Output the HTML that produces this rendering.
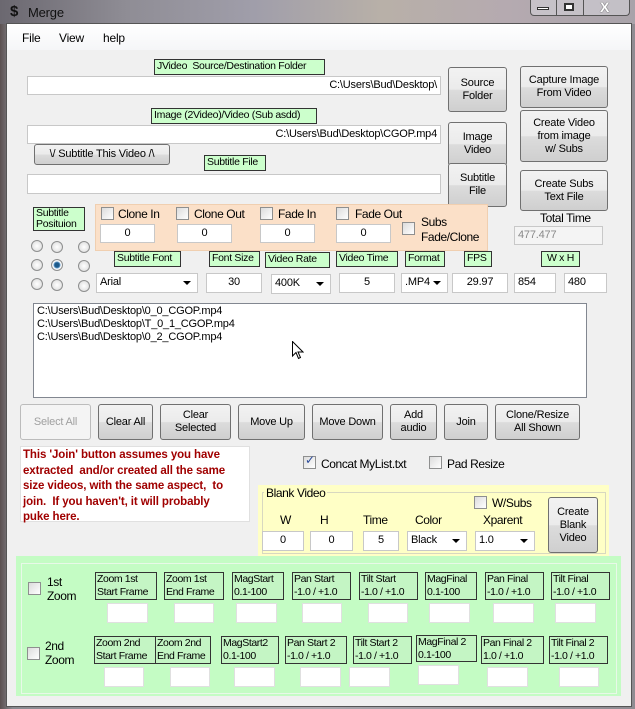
<!DOCTYPE html>
<html><head><meta charset="utf-8"><style>
*{box-sizing:border-box;margin:0;padding:0}
body{width:635px;height:709px;overflow:hidden;position:relative;background:linear-gradient(90deg,#5a5050 0,#8a8a90 2%,#a9a7ad 50%,#8f8c92 100%);font-family:"Liberation Sans",sans-serif;font-size:11px;color:#000;letter-spacing:-0.2px}
.a{position:absolute}
.client{position:absolute;left:6px;top:23px;width:626px;height:684px;background:#f0f0f0;border:1px solid #555}
.tb{position:absolute;background:#fff;border:1px solid #c8c8c8;height:19px;line-height:17px;padding:0 3px;white-space:nowrap;overflow:hidden}
.lbl{position:absolute;background:#ccffcc;border:1px solid #333;line-height:13px;padding:0 2px;white-space:nowrap;font-size:10.5px;letter-spacing:-0.3px;overflow:hidden}
.lblt{position:absolute;background:#c4f5c4;border:1px solid #333;line-height:13px;padding:0 1px;white-space:nowrap;font-size:10.5px;letter-spacing:-0.4px;overflow:hidden}
.btn{position:absolute;background:linear-gradient(#f2f2f2,#ebebeb 50%,#dcdcdc 51%,#cfcfcf);border:1px solid #707070;border-radius:3px;text-align:center;display:flex;align-items:center;justify-content:center;line-height:13px}
.cb{position:absolute;width:13px;height:13px;border:1px solid #8e8f8f;background:linear-gradient(135deg,#dcdcdc,#fff)}
.rd{position:absolute;width:12px;height:12px;border:1px solid #8e8f8f;border-radius:50%;background:radial-gradient(#fff,#d8d8d8)}
.dd::after{content:"";position:absolute;right:6px;top:7px;border-left:4px solid transparent;border-right:4px solid transparent;border-top:4px solid #000}
.t12{font-size:12px;letter-spacing:-0.4px}
</style></head><body>
<div class="a" style="left:0;top:0;width:635px;height:24px;background:linear-gradient(90deg,#6b6870,#8f8d95 20%,#a09eaa 40%,#b8b0a8 60%,#b5aab0 80%,#a9a3aa)"></div>
<div class="a" style="left:10px;top:3px;font-size:15px;font-weight:bold;color:#111">$</div>
<div class="a" style="left:28px;top:5px;font-size:13px;color:#111">Merge</div>
<div class="a" style="left:530px;top:-2px;width:100px;height:18px;border:1px solid #555;border-top:none;border-radius:0 0 4px 4px;background:rgba(220,220,225,.5)"></div>
<div class="a" style="left:556px;top:-2px;width:1px;height:18px;background:#555"></div>
<div class="a" style="left:583px;top:-2px;width:1px;height:18px;background:#555"></div>
<div class="a" style="left:537px;top:7px;width:12px;height:3px;background:#fff;border:1px solid #333"></div>
<div class="a" style="left:564px;top:3px;width:10px;height:8px;border:2px solid #333;background:#fff"></div>
<div class="a" style="left:600px;top:-1px;font-size:14px;font-weight:bold;color:#fff;text-shadow:0 0 1px #000">X</div>

<div class="client"></div>
<div class="a" style="left:7px;top:24px;width:624px;height:26px;background:linear-gradient(#fff,#f5f6f8)"></div>
<div class="a" style="left:22px;top:31px;font-size:12px">File</div>
<div class="a" style="left:59px;top:31px;font-size:12px">View</div>
<div class="a" style="left:103px;top:31px;font-size:12px">help</div>

<div class="lbl" style="left:154px;top:59px;width:171px;height:16px">JVideo&nbsp; Source/Destination Folder</div>
<div class="tb" style="left:27px;top:76px;width:414px;text-align:right">C:\Users\Bud\Desktop\</div>
<div class="btn" style="left:448px;top:67px;width:59px;height:45px">Source<br>Folder</div>
<div class="btn" style="left:520px;top:66px;width:88px;height:42px">Capture Image<br>From Video</div>

<div class="lbl" style="left:151px;top:108px;width:166px;height:16px">Image (2Video)/Video (Sub asdd)</div>
<div class="tb" style="left:27px;top:125px;width:414px;text-align:right">C:\Users\Bud\Desktop\CGOP.mp4</div>
<div class="btn" style="left:448px;top:122px;width:59px;height:44px">Image<br>Video</div>
<div class="btn" style="left:520px;top:110px;width:88px;height:52px">Create Video<br>from image<br>w/ Subs</div>

<div class="btn" style="left:34px;top:144px;width:136px;height:21px">\/ Subtitle This Video /\</div>
<div class="lbl" style="left:204px;top:155px;width:62px;height:16px">Subtitle File</div>
<div class="tb" style="left:27px;top:174px;width:414px;height:20px"></div>
<div class="btn" style="left:448px;top:163px;width:59px;height:44px">Subtitle<br>File</div>
<div class="btn" style="left:520px;top:170px;width:88px;height:41px">Create Subs<br>Text File</div>

<div class="lbl" style="left:33px;top:207px;width:52px;height:24px;line-height:11px">Subtitle<br>Posituion</div>
<div class="a" style="left:95px;top:204px;width:393px;height:47px;background:#fbe0c8;border:1px solid #f0cfb0"></div>
<div class="cb" style="left:101px;top:207px"></div><div class="a t12" style="left:118px;top:207px">Clone In</div>
<div class="cb" style="left:176px;top:207px"></div><div class="a t12" style="left:194px;top:207px">Clone Out</div>
<div class="cb" style="left:260px;top:207px"></div><div class="a t12" style="left:278px;top:207px">Fade In</div>
<div class="cb" style="left:336px;top:207px"></div><div class="a t12" style="left:355px;top:207px">Fade Out</div>
<div class="tb" style="left:100px;top:224px;width:55px;text-align:center">0</div>
<div class="tb" style="left:177px;top:224px;width:55px;text-align:center">0</div>
<div class="tb" style="left:260px;top:224px;width:55px;text-align:center">0</div>
<div class="tb" style="left:336px;top:224px;width:55px;text-align:center">0</div>
<div class="cb" style="left:402px;top:222px"></div><div class="a t12" style="left:421px;top:215px;line-height:15px">Subs<br>Fade/Clone</div>
<div class="a t12" style="left:540px;top:211px">Total Time</div>
<div class="tb" style="left:514px;top:226px;width:89px;background:#f4f4f4;color:#888">477.477</div>

<div class="rd" style="left:31px;top:240px"></div><div class="rd" style="left:51px;top:241px"></div><div class="rd" style="left:78px;top:241px"></div>
<div class="rd" style="left:31px;top:259px"></div><div class="rd" style="left:51px;top:259px;background:radial-gradient(#1d5a8a 30%,#6aa0d0 45%,#fff 55%,#d8d8d8)"></div><div class="rd" style="left:78px;top:260px"></div>
<div class="rd" style="left:31px;top:278px"></div><div class="rd" style="left:51px;top:279px"></div><div class="rd" style="left:78px;top:280px"></div>

<div class="lbl" style="left:114px;top:251px;width:67px;height:16px">Subtitle Font</div>
<div class="lbl" style="left:209px;top:251px;width:51px;height:16px">Font Size</div>
<div class="lbl" style="left:265px;top:252px;width:65px;height:16px">Video Rate</div>
<div class="lbl" style="left:336px;top:251px;width:62px;height:16px">Video Time</div>
<div class="lbl" style="left:405px;top:251px;width:40px;height:16px">Format</div>
<div class="lbl" style="left:464px;top:251px;width:28px;height:16px">FPS</div>
<div class="lbl" style="left:541px;top:251px;width:39px;height:16px;text-align:center">W x H</div>
<div class="tb dd" style="left:96px;top:273px;width:102px;height:20px">Arial</div>
<div class="tb" style="left:206px;top:273px;width:56px;height:20px;text-align:center">30</div>
<div class="tb dd" style="left:271px;top:274px;width:60px;height:20px">400K</div>
<div class="tb" style="left:339px;top:273px;width:56px;height:20px;text-align:center">5</div>
<div class="tb dd" style="left:401px;top:273px;width:47px;height:20px">.MP4</div>
<div class="tb" style="left:452px;top:273px;width:56px;height:20px;text-align:center">29.97</div>
<div class="tb" style="left:514px;top:273px;width:42px;height:20px">854</div>
<div class="tb" style="left:564px;top:273px;width:43px;height:20px">480</div>

<div class="a" style="left:33px;top:303px;width:554px;height:95px;background:#fff;border:1px solid #828790;padding:1px 3px;line-height:13px">C:\Users\Bud\Desktop\0_0_CGOP.mp4<br>C:\Users\Bud\Desktop\T_0_1_CGOP.mp4<br>C:\Users\Bud\Desktop\0_2_CGOP.mp4</div>
<svg class="a" style="left:292px;top:341px" width="12" height="19" viewBox="0 0 12 19"><path d="M0.5 0.5 L0.5 15 L4 11.5 L6.5 17.5 L8.5 16.5 L6 11 L11 11 Z" fill="#fff" stroke="#000"/></svg>

<div class="btn" style="left:20px;top:404px;width:71px;height:36px;color:#a0a0a0;background:#f4f4f4;border-color:#bcbcbc">Select All</div>
<div class="btn" style="left:98px;top:404px;width:55px;height:36px">Clear All</div>
<div class="btn" style="left:160px;top:404px;width:71px;height:36px">Clear<br>Selected</div>
<div class="btn" style="left:238px;top:404px;width:67px;height:36px">Move Up</div>
<div class="btn" style="left:312px;top:404px;width:71px;height:36px">Move Down</div>
<div class="btn" style="left:390px;top:404px;width:47px;height:36px">Add<br>audio</div>
<div class="btn" style="left:444px;top:404px;width:44px;height:36px">Join</div>
<div class="btn" style="left:495px;top:404px;width:85px;height:36px">Clone/Resize<br>All Shown</div>

<div class="a" style="left:20px;top:446px;width:230px;height:76px;background:#fff;border:1px solid #e0e0e0;color:#a00000;font-weight:bold;font-size:11.5px;letter-spacing:-0.1px;line-height:15.5px;padding:1px 2px">This 'Join' button assumes you have<br>extracted&nbsp; and/or created all the same<br>size videos, with the same aspect,&nbsp; to<br>join.&nbsp; If you haven't, it will probably<br>puke here.</div>

<div class="cb" style="left:303px;top:456px"></div><div class="a" style="left:305px;top:453px;font-size:12px;color:#2a4a9a">✓</div>
<div class="a t12" style="left:321px;top:457px">Concat MyList.txt</div>
<div class="cb" style="left:429px;top:456px"></div><div class="a t12" style="left:447px;top:457px">Pad Resize</div>

<div class="a" style="left:258px;top:485px;width:351px;height:71px;background:#ffffc6"></div>
<div class="a" style="left:262px;top:492px;width:344px;height:62px;border:1px solid #d8d8c0"></div>
<div class="a t12" style="left:264px;top:486px;background:#ffffc6;padding:0 2px">Blank Video</div>
<div class="cb" style="left:474px;top:496px"></div><div class="a t12" style="left:492px;top:496px">W/Subs</div>
<div class="a t12" style="left:280px;top:513px">W</div>
<div class="a t12" style="left:320px;top:513px">H</div>
<div class="a t12" style="left:363px;top:513px">Time</div>
<div class="a t12" style="left:415px;top:513px">Color</div>
<div class="a t12" style="left:483px;top:513px">Xparent</div>
<div class="tb" style="left:262px;top:531px;width:42px;height:20px;text-align:center">0</div>
<div class="tb" style="left:310px;top:531px;width:43px;height:20px;text-align:center">0</div>
<div class="tb" style="left:363px;top:531px;width:36px;height:20px;text-align:center">5</div>
<div class="tb dd" style="left:407px;top:531px;width:60px;height:20px">Black</div>
<div class="tb dd" style="left:475px;top:531px;width:60px;height:20px">1.0</div>
<div class="btn" style="left:548px;top:497px;width:50px;height:56px">Create<br>Blank<br>Video</div>

<div class="a" style="left:16px;top:556px;width:605px;height:140px;background:#c4fcc4"></div>
<div class="a" style="left:21px;top:563px;width:596px;height:131px;border:1px solid #e8f8e8"></div>
<div class="cb" style="left:28px;top:582px"></div><div class="a t12" style="left:47px;top:575px;line-height:14px">1st<br>Zoom</div>
<div class="lblt" style="left:95px;top:572px;width:62px;height:28px">Zoom 1st<br>Start Frame</div>
<div class="lblt" style="left:164px;top:572px;width:60px;height:28px">Zoom 1st<br>End Frame</div>
<div class="lblt" style="left:232px;top:572px;width:52px;height:28px">MagStart<br>0.1-100</div>
<div class="lblt" style="left:292px;top:572px;width:59px;height:28px">Pan Start<br>-1.0 / +1.0</div>
<div class="lblt" style="left:359px;top:572px;width:59px;height:28px">Tilt Start<br>-1.0 / +1.0</div>
<div class="lblt" style="left:425px;top:572px;width:52px;height:28px">MagFinal<br>0.1-100</div>
<div class="lblt" style="left:485px;top:572px;width:59px;height:28px">Pan Final<br>-1.0 / +1.0</div>
<div class="lblt" style="left:551px;top:572px;width:59px;height:28px">Tilt Final<br>-1.0 / +1.0</div>
<div class="tb" style="left:107px;top:603px;width:41px;height:20px;border-color:#e0e0e0"></div>
<div class="tb" style="left:174px;top:603px;width:40px;height:20px;border-color:#e0e0e0"></div>
<div class="tb" style="left:236px;top:603px;width:41px;height:20px;border-color:#e0e0e0"></div>
<div class="tb" style="left:302px;top:603px;width:40px;height:20px;border-color:#e0e0e0"></div>
<div class="tb" style="left:368px;top:603px;width:40px;height:20px;border-color:#e0e0e0"></div>
<div class="tb" style="left:429px;top:603px;width:41px;height:20px;border-color:#e0e0e0"></div>
<div class="tb" style="left:493px;top:603px;width:41px;height:20px;border-color:#e0e0e0"></div>
<div class="tb" style="left:555px;top:603px;width:41px;height:20px;border-color:#e0e0e0"></div>

<div class="cb" style="left:27px;top:647px"></div><div class="a t12" style="left:45px;top:639px;line-height:14px">2nd<br>Zoom</div>
<div class="lblt" style="left:94px;top:636px;width:62px;height:28px">Zoom 2nd<br>Start Frame</div>
<div class="lblt" style="left:155px;top:636px;width:56px;height:28px">Zoom 2nd<br>End Frame</div>
<div class="lblt" style="left:221px;top:636px;width:58px;height:28px">MagStart2<br>0.1-100</div>
<div class="lblt" style="left:285px;top:636px;width:62px;height:28px">Pan Start 2<br>-1.0 / +1.0</div>
<div class="lblt" style="left:353px;top:636px;width:59px;height:28px">Tilt Start 2<br>-1.0 / +1.0</div>
<div class="lblt" style="left:416px;top:635px;width:61px;height:27px">MagFinal 2<br>0.1-100</div>
<div class="lblt" style="left:481px;top:636px;width:63px;height:28px">Pan Final 2<br>1.0 / +1.0</div>
<div class="lblt" style="left:549px;top:636px;width:59px;height:28px">Tilt Final 2<br>-1.0 / +1.0</div>
<div class="tb" style="left:104px;top:667px;width:40px;height:20px;border-color:#e0e0e0"></div>
<div class="tb" style="left:170px;top:667px;width:40px;height:20px;border-color:#e0e0e0"></div>
<div class="tb" style="left:234px;top:667px;width:41px;height:20px;border-color:#e0e0e0"></div>
<div class="tb" style="left:300px;top:667px;width:41px;height:20px;border-color:#e0e0e0"></div>
<div class="tb" style="left:349px;top:667px;width:41px;height:20px;border-color:#e0e0e0"></div>
<div class="tb" style="left:418px;top:665px;width:41px;height:20px;border-color:#e0e0e0"></div>
<div class="tb" style="left:487px;top:667px;width:41px;height:20px;border-color:#e0e0e0"></div>
<div class="tb" style="left:559px;top:667px;width:40px;height:20px;border-color:#e0e0e0"></div>
</body></html>
